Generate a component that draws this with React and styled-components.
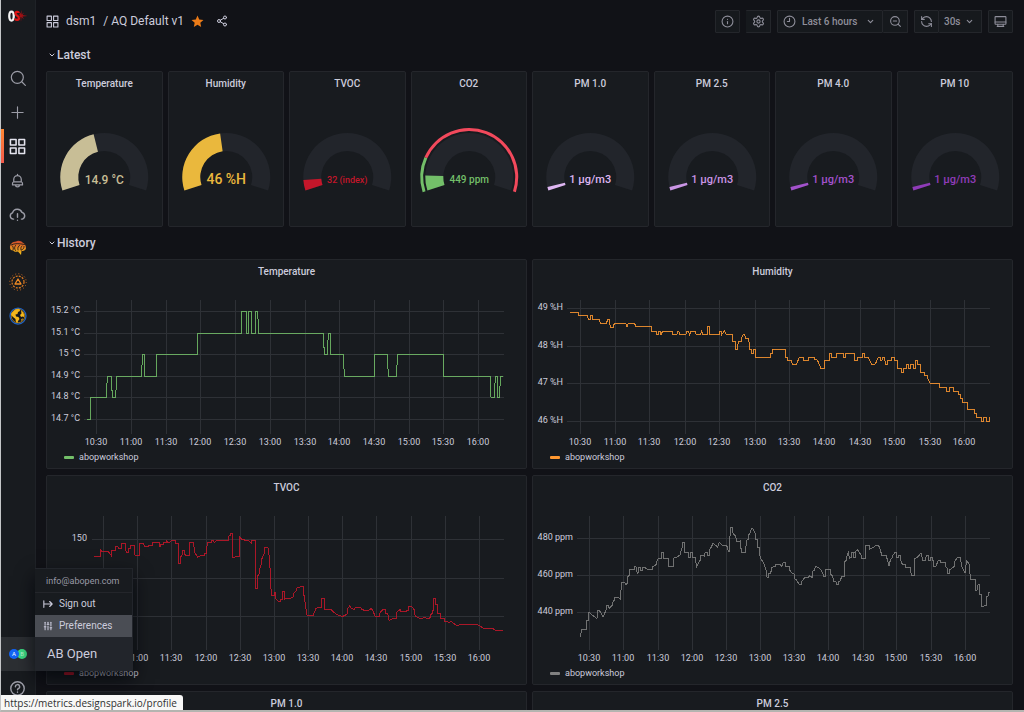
import React from "react";
import styled, { createGlobalStyle, css } from "styled-components";
import { Info, Settings, ZoomOut, RefreshCcw, Share2, ChevronDown, SlidersVertical } from "lucide-react";

const color = {
  canvas: "#111217",
  panel: "#181b1f",
  raised: "#22252b",
  border: "#24262b",
  text: "#ccccdc",
  muted: "#8e8e9a",
  grid: "#2e3136",
  orange: "#f2803c",
};

const GlobalStyle = createGlobalStyle`
  *, *::before, *::after { box-sizing: border-box; }
  body {
    margin: 0;
    background: ${color.canvas};
    color: ${color.text};
    font-family: Roboto, "Liberation Sans", sans-serif;
    font-size: 10px;
    line-height: 1.2;
  }
  button { font: inherit; color: inherit; }
  a { color: inherit; text-decoration: none; }
`;

const Shell = styled.div`
  display: flex;
  position: relative;
  height: 100vh;
  overflow: hidden;
  border-left: 1px solid #c4c6c8;
  border-bottom: 2px solid #b4b4b0;
`;

/* ---------- side navigation ---------- */

const Sidebar = styled.nav`
  display: flex;
  flex-direction: column;
  flex: none;
  width: 35px;
  background: ${color.panel};
  border-right: 1px solid #1f2227;
  padding-bottom: 5px;
  color: #9b9ca6;
  z-index: 2;
`;

const Logo = styled.a`
  display: flex;
  justify-content: center;
  width: 33px;
  height: 61px;
  padding-top: 6px;
`;

const NavItem = styled.a`
  display: flex;
  align-items: center;
  justify-content: center;
  position: relative;
  width: 33px;
  height: 34px;
  ${(p) =>
    p.$active &&
    css`
      color: #e4e4ee;
      &::before {
        content: "";
        position: absolute;
        left: 0;
        top: 0;
        bottom: 0;
        width: 3px;
        background: linear-gradient(#ff8833, #f2594b);
      }
    `}
`;

const NavBottom = styled.div`
  margin-top: auto;
`;

const ProfileItem = styled.div`
  position: relative;
  background: #2c2f33;
`;

const ProfileMenu = styled.div`
  position: absolute;
  left: 100%;
  bottom: 0;
  width: 98px;
  background: ${color.panel};
  border: 1px solid ${color.raised};
  border-width: 1px 1px 0 0;
  box-shadow: 0 8px 18px rgba(1, 4, 9, 0.75);
  color: ${color.text};
`;

const MenuEmail = styled.div`
  height: 24px;
  padding: 0 11px;
  font-size: 9px;
  line-height: 24px;
  color: #9a9aa6;
  border-bottom: 1px solid ${color.border};
`;

const MenuLink = styled.a`
  display: flex;
  align-items: center;
  gap: 6px;
  height: 22px;
  padding: 0 8px;
  background: ${(p) => (p.$hover ? "#4a4d54" : "transparent")};
`;

const MenuTitle = styled.a`
  display: flex;
  align-items: center;
  height: 34px;
  padding: 0 12px;
  background: ${color.raised};
  font-size: 13px;
`;

/* ---------- page header ---------- */

const Main = styled.main`
  flex: 1;
  min-width: 0;
  padding: 10px 11px 0 10px;
`;

const Toolbar = styled.header`
  display: flex;
  align-items: center;
  justify-content: space-between;
  height: 23px;
  margin-bottom: 6px;
`;

const Crumbs = styled.div`
  display: flex;
  align-items: center;
  gap: 7px;
  font-size: 12px;
`;

const IconButton = styled.button`
  display: flex;
  padding: 0;
  border: 0;
  background: none;
  margin-left: ${(p) => (p.$spaced ? "5px" : "0")};
`;

const Tools = styled.div`
  display: flex;
  gap: 6px;
`;

const ToolGroup = styled.div`
  display: flex;
`;

const ToolButton = styled.button`
  display: flex;
  align-items: center;
  justify-content: ${(p) => (p.$wide ? "space-between" : "center")};
  width: ${(p) => p.$wide || "25px"};
  height: 23px;
  padding: ${(p) => (p.$wide ? "0 7px 0 5px" : "0")};
  background: #16191d;
  border: 1px solid ${color.border};
  border-radius: 1px;
  color: ${color.muted};
  font-weight: 500;
  & + & {
    border-left: 0;
  }
`;

const TimeLabel = styled.span`
  display: flex;
  align-items: center;
  gap: 6px;
`;

/* ---------- panels ---------- */

const RowTitle = styled.button`
  display: flex;
  align-items: center;
  gap: 1px;
  height: 32px;
  padding: 0 2px;
  border: 0;
  background: none;
  font-size: 12px;
  font-weight: 500;
`;

const GaugeGrid = styled.section`
  display: grid;
  grid-template-columns: repeat(8, 1fr);
  gap: 5px;
`;

const ChartGrid = styled.section`
  display: grid;
  grid-template-columns: repeat(2, 1fr);
  gap: 6px 5px;
`;

const Panel = styled.article`
  background: ${color.panel};
  border: 1px solid ${color.border};
  border-radius: 2px;
  min-width: 0;
`;

const PanelTitle = styled.h2`
  margin: 0;
  font-size: 10px;
  font-weight: 500;
  line-height: 23px;
  text-align: center;
`;

const GaugeSvg = styled.svg`
  display: block;
  width: 100%;
  height: 131px;
  font-weight: 500;
  text-anchor: middle;
`;

const ChartSvg = styled.svg`
  display: block;
  width: 100%;
  font-size: 9px;
  fill: ${color.text};
`;

const Legend = styled.div`
  display: flex;
  align-items: center;
  gap: 5px;
  height: 17px;
  padding: 0 17px 5px;
  font-size: 9px;
  &::before {
    content: "";
    width: 10px;
    height: 3px;
    border-radius: 1px;
    background: ${(p) => p.$color};
  }
`;

const StatusBar = styled.div`
  position: absolute;
  left: -1px;
  bottom: 0;
  z-index: 3;
  height: 15px;
  padding: 0 6px 0 4px;
  background: #f8f8f7;
  border-top-right-radius: 3px;
  color: #303030;
  font-family: "Open Sans", "Noto Sans", sans-serif;
  font-size: 10px;
  line-height: 16px;
`;

/* ---------- icons ---------- */

const Icon = ({ size = 15, width = 2, children }) => (
  <svg width={size} height={size} viewBox="0 0 24 24" fill="none" stroke="currentColor"
    strokeWidth={width} strokeLinecap="round" strokeLinejoin="round" aria-hidden="true">
    {children}
  </svg>
);

const AppsIcon = ({ size, width }) => (
  <Icon size={size} width={width}>
    <rect x="2" y="2" width="8" height="8" /><rect x="14" y="2" width="8" height="8" />
    <rect x="2" y="14" width="8" height="8" /><rect x="14" y="14" width="8" height="8" />
  </Icon>
);

const SearchIcon = () => (
  <Icon size={16} width={1.8}><circle cx="11" cy="11" r="9" /><path d="M18 18l5 5" /></Icon>
);
const PlusIcon = () => <Icon size={15} width={1.8}><path d="M12 3v18M3 12h18" /></Icon>;
const BellIcon = () => (
  <Icon size={15}>
    <path d="M12 2v2M6 14v-4a6 6 0 0 1 12 0v4M4 19v-2a3 3 0 0 1 2-3h12a3 3 0 0 1 2 3v2zM9 19a3 3 0 0 0 6 0" />
  </Icon>
);
const CloudIcon = () => (
  <Icon size={17}>
    <path d="M6.500 18.500H6A4.500 4.500 0 0 1 5 9.700 7 7 0 0 1 18.300 9 5 5 0 0 1 19 18.500h-1.500M12 11v5M12 20v.2" />
  </Icon>
);
const HelpIcon = () => (
  <Icon size={17}>
    <circle cx="12" cy="12" r="9.500" />
    <path d="M9 9.500a3 3 0 1 1 4 2.800c-.7.300-1 .8-1 1.500M12 17v.2" />
  </Icon>
);
const ClockIcon = () => <Icon size={13}><circle cx="12" cy="12" r="10" /><path d="M12 6v6H8" /></Icon>;
const MonitorIcon = () => (
  <Icon size={13}><rect x="2" y="3" width="20" height="14" rx="1" /><path d="M2 13h20M7 17v4M17 17v4M6 21h12" /></Icon>
);
const StarIcon = () => (
  <svg width="13" height="13" viewBox="0 0 24 24" fill="#eb7b18" aria-hidden="true">
    <path d="M12 1l3.200 7.200 7.800.8-5.800 5.300 1.600 7.700L12 18l-6.800 4 1.600-7.700L1 9l7.800-.8z" />
  </svg>
);
const SignOutIcon = () => <Icon size={10} width={2.6}><path d="M2 4v16M2 12h20M16 6l6 6-6 6" /></Icon>;

const BrainIcon = () => (
  <svg width="18" height="16" viewBox="0 0 36 32" fill="none" strokeLinecap="round" aria-hidden="true">
    <defs>
      <linearGradient id="brain" x1="0" y1="0" x2="0" y2="1">
        <stop offset="0" stopColor="#d0482c" /><stop offset="1" stopColor="#f5c518" />
      </linearGradient>
    </defs>
    <path d="M2 15C1 9 7 3 14 3c4-3 11-1 13 2 5 2 7 6 7 12-1 4-5 5-9 5l-1 8-6-7c-6 2-9-1-10-2-4 0-6-2-6-6z" fill="url(#brain)" />
    <path d="M7 12c2 3 2 5 1 8M13 11c-2 3-3 6 0 10M18 20c-1-5 0-7 3-9M24 20c-1-4 0-6 2-8M30 13c0 4-2 6-5 7M4 10c8-4 16-3 27-1" stroke="#20181a" strokeWidth="1.800" />
  </svg>
);

const SensorIcon = () => (
  <svg width="18" height="18" viewBox="0 0 36 36" fill="none" stroke="#f08a24" aria-hidden="true">
    <circle cx="18" cy="18" r="16.500" strokeWidth="2" strokeDasharray="2 4.500" stroke="#c96a20" />
    <circle cx="18" cy="18" r="12" strokeWidth="2.500" strokeDasharray="4 2.300" stroke="#d87820" />
    <path d="M18 12l6 10H12z" strokeWidth="2.600" strokeLinejoin="round" />
  </svg>
);

const GlobeIcon = () => (
  <svg width="18" height="18" viewBox="0 0 36 36" aria-hidden="true">
    <circle cx="18" cy="18" r="16" fill="#15181d" stroke="#1f62c4" strokeWidth="2.500" />
    <path d="M8 9c4-5 9-6 13-5l1 4-4 2-1 4-4 1 1 4 5 1 2 4-3 4-1 4c-3-1-4-5-4-8l-5-4-4-4c0-3 1-5 4-7z" fill="#f5b81c" />
    <path d="M24 7c5 3 7 7 6 13l-3-1-3 1-2-4 3-3zM25 24l3-1c-1 3-2 4-4 5z" fill="#f5b81c" />
    <circle cx="18" cy="18" r="13.500" fill="none" stroke="#e8a417" strokeWidth="1.300" />
  </svg>
);

const BrandLogo = () => (
  <svg width="20" height="20" viewBox="0 0 40 40" aria-hidden="true">
    <ellipse cx="7" cy="20" rx="4.500" ry="9" fill="none" stroke="#f4f4f4" strokeWidth="4.500" />
    <path d="M22 14c-1-3-7-3-7 1 0 5 7 4 7 9 0 5-7 5-8 1" fill="none" stroke="#e01414" strokeWidth="4.500" />
    <path d="M27 8l0 9 5-4-3 5 10 2-10 1 3 6-5-5-1 10-1-10-4 3 3-6-4-1 4-2-3-5 4 4z" fill="#a01014" />
  </svg>
);

const AvatarIcon = () => (
  <svg width="18" height="12" viewBox="0 0 18 12" fontSize="6" textAnchor="middle" fill="#fff" aria-hidden="true">
    <circle cx="13" cy="6" r="5" fill="#3ddc84" />
    <circle cx="5" cy="6" r="5" fill="#1264f5" />
    <text x="5" y="8">A</text>
    <text x="13" y="8" fill="#b5f5d0">B</text>
  </svg>
);

/* ---------- gauges ---------- */

const CX = 57;
const CY = 82;
const START = -108;
const SWEEP = 216;

const polar = (r, deg) => {
  const a = (deg * Math.PI) / 180;
  return `${(CX + r * Math.sin(a)).toFixed(2)},${(CY - r * Math.cos(a)).toFixed(2)}`;
};

const band = (inner, outer, from, to) => {
  const large = to - from > 180 ? 1 : 0;
  const a = START + from;
  const b = START + to;
  return `M${polar(outer, a)}A${outer},${outer} 0 ${large} 1 ${polar(outer, b)}L${polar(inner, b)}A${inner},${inner} 0 ${large} 0 ${polar(inner, a)}Z`;
};

const gauges = [
  { title: "Temperature", value: "14.9 °C", sweep: 94, color: "#c8be96", size: 12 },
  { title: "Humidity", value: "46 %H", sweep: 100, color: "#eab83d", size: 14 },
  { title: "TVOC", value: "32 (index)", sweep: 14, color: "#c4162a", size: 9 },
  { title: "CO2", value: "449 ppm", sweep: 20, color: "#73bf69", size: 10, threshold: 42 },
  { title: "PM 1.0", value: "1 µg/m3", sweep: 5, color: "#deb6f2", size: 11 },
  { title: "PM 2.5", value: "1 µg/m3", sweep: 5, color: "#ca95e5", size: 11 },
  { title: "PM 4.0", value: "1 µg/m3", sweep: 5, color: "#a352cc", size: 11 },
  { title: "PM 10", value: "1 µg/m3", sweep: 5, color: "#8f3bb8", size: 11 },
];

const GaugePanel = ({ title, value, sweep, color: tint, size, threshold }) => (
  <Panel>
    <PanelTitle>{title}</PanelTitle>
    <GaugeSvg viewBox="0 0 114 131" role="img" aria-label={`${title}: ${value}`}>
      <path d={band(26, 44, 0, SWEEP)} fill={color.raised} />
      <path d={band(26, 44, 0, sweep)} fill={tint} />
      {threshold && (
        <>
          <path d={band(46, 49, 0, threshold)} fill="#73bf69" />
          <path d={band(46, 49, threshold, SWEEP)} fill="#f2495c" />
        </>
      )}
      <text x={CX} y={size > 11 ? 89 : 88} fontSize={size} fill={tint}>{value}</text>
    </GaugeSvg>
  </Panel>
);

/* ---------- history charts ---------- */

const TIMES = ["10:30", "11:00", "11:30", "12:00", "12:30", "13:00", "13:30", "14:00", "14:30", "15:00", "15:30", "16:00"];

/* Traces are drawn at three units to the pixel; each part is [x shift, path]. */
const charts = [
  {
    title: "Temperature", color: "#73bf69", left: 37, labelRight: 33,
    columns: [49, 84, 119, 153, 188, 223, 258, 292, 327, 362, 396, 431],
    rows: [[28, "15.2 °C"], [50, "15.1 °C"], [71, "15 °C"], [93, "14.9 °C"], [114, "14.8 °C"], [136, "14.7 °C"]],
    origin: [-47, -53],
    trace: [
      [0, "M261,568H272V502H319L322,439H334L337,502H347L350,439H425L427,373H433V439H469V373H592L593,310H725V243H739V310H745V243H754V310H767V243H773L776,310H810"],
      [810, "M0,310H160L163,373H172L175,310H182V373H220L223,439H313V373H352L355,439H380L382,373H520V439H661L663,502H673L676,439H682L683,502H689L691,439H699"],
    ],
  },
  {
    title: "Humidity", color: "#ff9830", left: 34, labelRight: 30,
    columns: [47, 82, 116, 152, 186, 222, 256, 291, 327, 361, 397, 431],
    rows: [[25, "49 %H"], [63, "48 %H"], [100, "47 %H"], [138, "46 %H"]],
    origin: [-8, -33],
    trace: [
      [0, "M135,186H160V196H187L190,209H195L197,196H202L204,209H223L226,220H244L248,209H253L256,231H265L268,220H302L306,231L310,220H329L332,230H380V243H393V254H401V243H405L408,254L413,243H442V254H455L459,243H461L464,254H482L486,243H490L494,254L498,243H510L514,254H526L530,243L534,254H547V230H553V254H582V243H588L590,254L598,243L604,254H622V275H631V298H637L640,275H650V264L654,254H658L662,264H671L674,298H679V310H686V298H692V321H736V310H742V298"],
      [735, "M7,298H46V321H52V332H65L67,343H80L83,332H85L88,321H101V332H114V321H134V328H139L143,332L151,350V355H164V332H177V321L180,310H185V321H200V310H220V321H226V310H253L255,332H262V321H276V310H284V321H294L300,332L305,343H315L319,336L325,321H331V332H335L339,321H344L346,343H352V332H365V321H373V332H381V355H393V366H401V355H409V343H414V355H422V343H430V355H437V332H443V343H452V366H464V376H471L474,388L481,400H508V411H529V424H537V411H549V424H564V433H570V445H577V456H592V478H613V490H619V502H634V514H640V502H649V514H657V502H659"],
    ],
  },
  {
    title: "TVOC", color: "#c4162a", left: 45, labelRight: 40,
    columns: [56, 90, 124, 159, 193, 227, 261, 295, 329, 364, 398, 432],
    rows: [[40, "150"], [79], [117]],
    firstTime: 1,
    origin: [-47, -29],
    trace: [
      [0, "M283,259H301V240L304,243H323L327,247L334,257V240H347V229H353L357,235H364L366,219H375V235L379,247H385V235H390V226H402V247L405,255H418V219H430L433,229H445V226H458V216H477L480,230V222H489V216H499V211L503,217H510L514,211H526V219H535V280H541V262L546,255V240H552V250L557,256H567V217H580L585,248L593,262L601,257H612V250H619L622,216H633V211H639L643,217L650,211H684V199L690,196V189H697V263H703L707,258H717V198L723,205V209H733V212H745L755,219V212H766V355H772V320L778,310V300L785,280V268L793,250V233H804L808,262V285L811,300"],
      [810, "M0,300L4,376H12V367H17V385L25,395H32V387H37V363H44V387L60,385L70,380V372L78,363V355L95,349H100L103,390L107,400L109,434L117,438L131,436V430L135,424V418L144,411H153V385H163V418H185V421L192,427L200,433L215,439L226,437V433H231L233,420V416L240,407L244,415L252,419L257,411H270L276,418L285,422L297,420L304,415L310,425L315,439H327V434L332,425L340,418H347V430H353L357,451L370,445H379V427L391,418V423L404,425L415,421L416,408H423L432,418V430L438,440L449,445H456L462,442L474,447L481,442V436L486,430V420H489V385H497V403H503V430H511V445H523V454L538,457L545,454L550,460L562,467L570,463H620L630,468L640,475H667L677,481L700,482"],
    ],
  },
  {
    title: "CO2", color: "#808080", left: 44, labelRight: 40,
    columns: [56, 90, 125, 159, 193, 227, 261, 295, 330, 363, 398, 432],
    rows: [[39, "480 ppm"], [76, "460 ppm"], [113, "440 ppm"]],
    origin: [-8, -29],
    trace: [
      [0, "M165,500L168,490V478H183V451H190V436L191,427L196,430L208,440L215,445L218,440V421H223L229,430L234,440L239,430L245,415V406H249L254,418V413L263,405V397L268,390V382H280L286,388L288,360V337H299L303,343L307,340V322L314,315V298H328V290H333L337,310L340,308V293H346V301H353V293H360L370,299H383V290L395,283V275L400,265H408V248H415V265H430V290H445V265L455,262L466,254V248L473,230V217H479V248H490V262H497V248H503V262H510L515,290L520,280L526,270V256H537V262L540,248H547V256H553V240L560,230L563,220L571,225L577,230V234L583,217L592,226H605L610,243H613V215L616,190V172H621L625,193L632,197V200L636,215H646V211L649,247H662L664,211L670,208V193H674L679,176H684L690,190V208H697V232H702L706,265L714,275L720,290L724,305L726,321H731V311L738,309"],
      [735, "M0,310L4,303L5,292L15,290V283H30L36,289L40,277H45V289H57V298L65,308L72,312V325L80,330L87,343H95V334L105,322H115L119,318L126,322V305L132,302L137,289L150,296L158,308L161,320H167V299H180V312L188,318L191,333H197L200,343H205V333H210L216,318H223V277L230,270V260L235,248L239,265L244,262V248H250V262H255V248L262,238L268,248L273,255V264H285V227H297V238L310,232L317,227H326L331,240L335,255H348V265H352L357,289L361,270L368,262V257L375,248H380V262H386V255H392V270L397,283H406V292H420L424,316H434V267L441,262L448,256L453,248L458,270H467L469,255H475V270H482V262H488L491,289H498L504,272H511V278H526V290L533,296V310H539V300L552,290V277L563,262H571L575,290L585,308L590,272L598,283L601,327H615V360H621L624,344H628V373H634V410L648,406V380L655,378V366H659"],
    ],
  },
];

const ChartPanel = ({ title, color: tint, left, labelRight, columns, rows, origin, trace, firstTime = 0 }) => (
  <Panel>
    <PanelTitle>{title}</PanelTitle>
    <ChartSvg viewBox="0 0 479 168" role="img" aria-label={`${title} history`}>
      <g fill={color.grid}>
        {columns.map((x) => <rect key={x} x={x} y="17" width="1" height="134" />)}
        {rows.map(([y]) => <rect key={y} x={left} y={y} width={457 - left} height="1" />)}
      </g>
      <g transform={`translate(${origin[0]} ${origin[1]}) scale(${1 / 3})`}
        fill="none" stroke={tint} strokeWidth="3" strokeOpacity="0.85" shapeRendering="crispEdges">
        {trace.map(([shift, d]) => <path key={shift} transform={`translate(${shift} 0)`} d={d} />)}
      </g>
      <g textAnchor="end">
        {rows.map(([y, label]) => label && <text key={y} x={labelRight} y={y + 2}>{label}</text>)}
      </g>
      <g textAnchor="middle">
        {columns.map((x, i) => i >= firstTime && <text key={x} x={x} y="162">{TIMES[i]}</text>)}
      </g>
    </ChartSvg>
    <Legend $color={tint}>abopworkshop</Legend>
  </Panel>
);

/* ---------- page ---------- */

const navItems = [
  ["Search", SearchIcon],
  ["Create", PlusIcon],
  ["Dashboards", () => <AppsIcon size={17} width={2.2} />],
  ["Alerting", BellIcon],
  ["Cloud alerts", CloudIcon],
  ["Machine learning", BrainIcon],
  ["Sensors", SensorIcon],
  ["World", GlobeIcon],
];

export default function App() {
  return (
    <>
      <GlobalStyle />
      <Shell>
        <Sidebar>
          <Logo href="#" aria-label="Home"><BrandLogo /></Logo>
          {navItems.map(([name, Glyph]) => (
            <NavItem key={name} href="#" aria-label={name} $active={name === "Dashboards"}><Glyph /></NavItem>
          ))}
          <NavBottom>
            <ProfileItem>
              <NavItem href="#" aria-label="Profile"><AvatarIcon /></NavItem>
              <ProfileMenu>
                <MenuEmail>info@abopen.com</MenuEmail>
                <MenuLink href="#"><SignOutIcon />Sign out</MenuLink>
                <MenuLink href="#" $hover><SlidersVertical size={10} strokeWidth={2.5} />Preferences</MenuLink>
                <MenuTitle href="#">AB Open</MenuTitle>
              </ProfileMenu>
            </ProfileItem>
            <NavItem href="#" aria-label="Help"><HelpIcon /></NavItem>
          </NavBottom>
        </Sidebar>
        <Main>
          <Toolbar>
            <Crumbs>
              <AppsIcon size={13} />
              <a href="#">dsm1</a>
              <a href="#">/ AQ Default v1</a>
              <IconButton aria-label="Favourite"><StarIcon /></IconButton>
              <IconButton aria-label="Share" $spaced><Share2 size={12} /></IconButton>
            </Crumbs>
            <Tools>
              <ToolButton aria-label="Information"><Info size={13} /></ToolButton>
              <ToolButton aria-label="Settings"><Settings size={13} /></ToolButton>
              <ToolGroup>
                <ToolButton $wide="106px">
                  <TimeLabel><ClockIcon />Last 6 hours</TimeLabel>
                  <ChevronDown size={9} strokeWidth={3} />
                </ToolButton>
                <ToolButton aria-label="Zoom out"><ZoomOut size={13} /></ToolButton>
              </ToolGroup>
              <ToolGroup>
                <ToolButton aria-label="Refresh"><RefreshCcw size={13} /></ToolButton>
                <ToolButton $wide="43px">30s<ChevronDown size={9} strokeWidth={3} /></ToolButton>
              </ToolGroup>
              <ToolButton aria-label="Kiosk mode"><MonitorIcon /></ToolButton>
            </Tools>
          </Toolbar>
          <RowTitle><ChevronDown size={8} strokeWidth={3} />Latest</RowTitle>
          <GaugeGrid>
            {gauges.map((g) => <GaugePanel key={g.title} {...g} />)}
          </GaugeGrid>
          <RowTitle><ChevronDown size={8} strokeWidth={3} />History</RowTitle>
          <ChartGrid>
            {charts.map((c) => <ChartPanel key={c.title} {...c} />)}
            <Panel><PanelTitle>PM 1.0</PanelTitle></Panel>
            <Panel><PanelTitle>PM 2.5</PanelTitle></Panel>
          </ChartGrid>
        </Main>
        <StatusBar>https://metrics.designspark.io/profile</StatusBar>
      </Shell>
    </>
  );
}
